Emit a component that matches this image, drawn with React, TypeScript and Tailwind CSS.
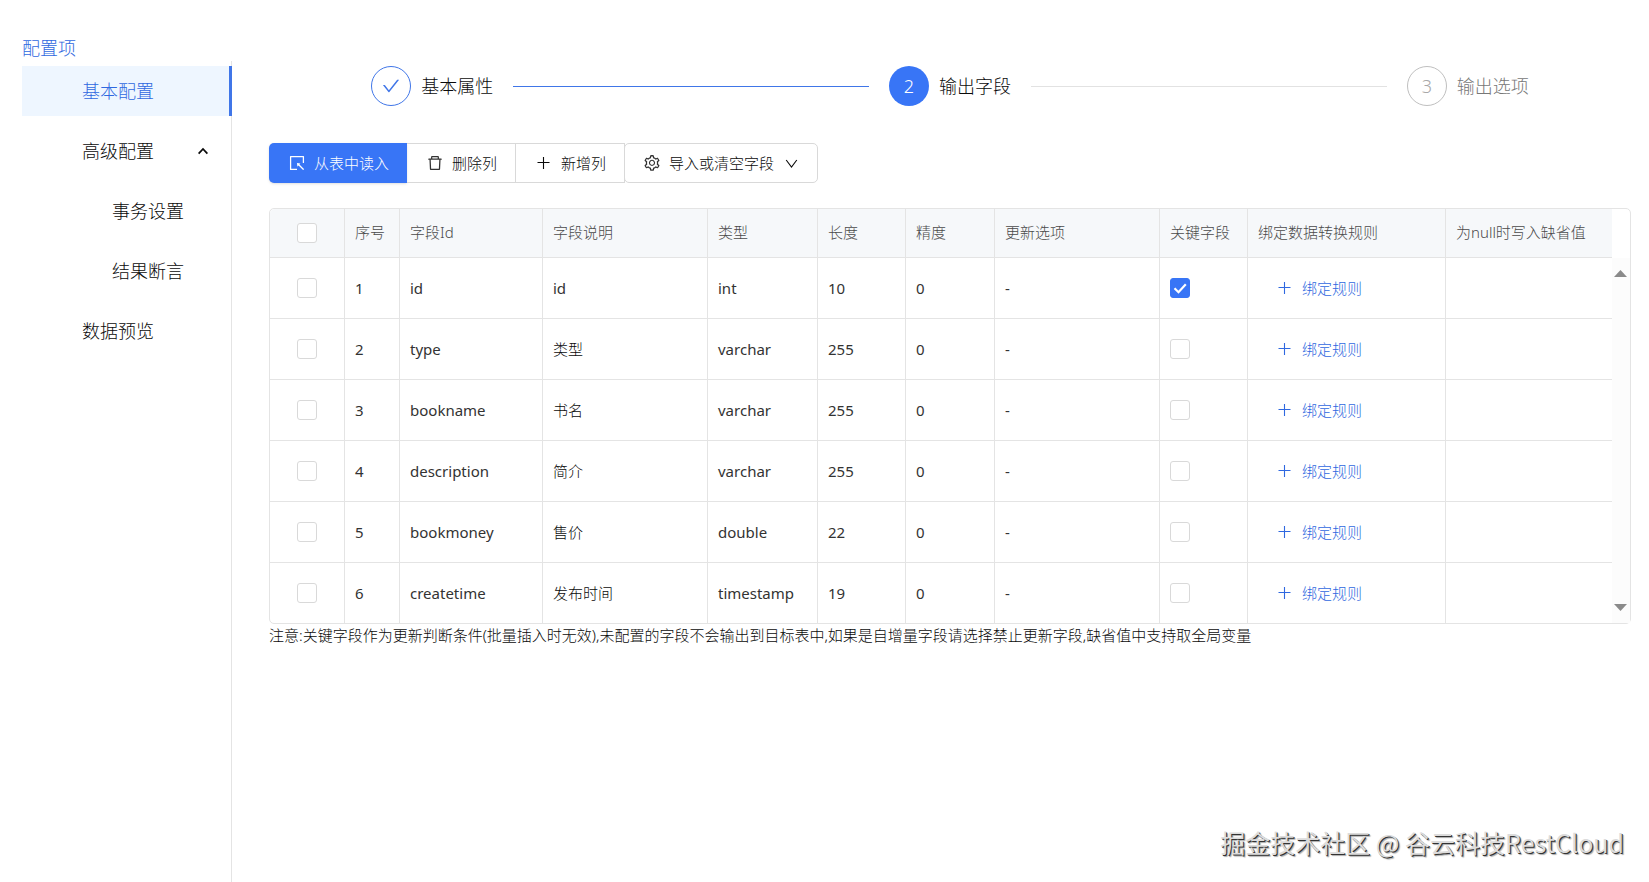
import React from 'react';
import {
  AiOutlineCheck,
  AiOutlineDelete,
  AiOutlineSelect,
  AiOutlineSetting
} from 'react-icons/ai';

const fields = [
  { no: 1, id: 'id', desc: 'id', type: 'int', length: 10, scale: 0, isKey: true },
  { no: 2, id: 'type', desc: '类型', type: 'varchar', length: 255, scale: 0, isKey: false },
  { no: 3, id: 'bookname', desc: '书名', type: 'varchar', length: 255, scale: 0, isKey: false },
  { no: 4, id: 'description', desc: '简介', type: 'varchar', length: 255, scale: 0, isKey: false },
  { no: 5, id: 'bookmoney', desc: '售价', type: 'double', length: 22, scale: 0, isKey: false },
  { no: 6, id: 'createtime', desc: '发布时间', type: 'timestamp', length: 19, scale: 0, isKey: false }
];

const headers = ['序号', '字段Id', '字段说明', '类型', '长度', '精度', '更新选项', '关键字段', '绑定数据转换规则', '为null时写入缺省值'];

function PlusIcon() {
  return (
    <svg viewBox="0 0 18 18" className="size-[18px]" fill="none" stroke="currentColor" strokeWidth="1.1">
      <path d="M8.5 3v12M2.5 8.5h12" />
    </svg>
  );
}

function Checkbox({ label, checked = false }: { label: string; checked?: boolean }) {
  return (
    <span className="relative block size-5">
      <input
        type="checkbox"
        aria-label={label}
        defaultChecked={checked}
        className="peer block size-5 appearance-none rounded-[3px] border border-[#d9d9d9] bg-white checked:border-[#3875f6] checked:bg-[#3875f6]"
      />
      <svg viewBox="0 0 20 20" className="pointer-events-none absolute inset-0 hidden size-5 peer-checked:block" fill="none" stroke="white" strokeWidth="2.2">
        <path d="M4.5 10.2 8.5 14.2 15.8 6.2" />
      </svg>
    </span>
  );
}

function Sidebar() {
  return (
    <aside className="flex w-[232px] shrink-0 flex-col pl-[22px] text-lg">
      <h2 className="pt-[35px] leading-[26px] text-[#2f68e0]">配置项</h2>
      <nav className="flex-1 border-r border-[#e4e4e4] pt-[5px]">
        <ul className="space-y-[10px] leading-[50px]">
          <li>
            <a href="#basic" className="-mr-px block border-r-3 border-[#4076e8] bg-[#eef6ff] pl-[60px] text-[#2f68e0]">基本配置</a>
          </li>
          <li>
            <button type="button" className="flex w-full items-center justify-between pr-[23px] pl-[60px]">
              高级配置
              <svg viewBox="0 0 10 8" className="h-2 w-[10px]" fill="none" stroke="currentColor" strokeWidth="1.8">
                <path d="M0.6 6.6 5 2 9.4 6.6" />
              </svg>
            </button>
          </li>
          <li>
            <a href="#transaction" className="block pl-[90px]">事务设置</a>
          </li>
          <li>
            <a href="#assertion" className="block pl-[90px]">结果断言</a>
          </li>
          <li>
            <a href="#preview" className="block pl-[60px]">数据预览</a>
          </li>
        </ul>
      </nav>
    </aside>
  );
}

function Steps() {
  return (
    <ol className="mx-auto flex w-[85%] items-center gap-5 text-lg leading-10">
      <li className="flex flex-1 items-center">
        <span className="flex size-10 items-center justify-center rounded-full border border-[#4076e8] text-[#4076e8]">
          <AiOutlineCheck className="size-5" />
        </span>
        <span className="ml-[10px]">基本属性</span>
        <span className="ml-5 h-px flex-1 bg-[#4076e8]" />
      </li>
      <li className="flex flex-1 items-center" aria-current="step">
        <span className="flex size-10 items-center justify-center rounded-full bg-[#3875f6] text-white">2</span>
        <span className="ml-[10px]">输出字段</span>
        <span className="ml-5 h-px flex-1 bg-[#e2e2e2]" />
      </li>
      <li className="flex items-center">
        <span className="flex size-10 items-center justify-center rounded-full border border-[#bfbfbf] text-[#a8a8a8]">3</span>
        <span className="ml-[10px] text-[#777]">输出选项</span>
      </li>
    </ol>
  );
}

function Toolbar() {
  return (
    <div className="mt-[37px] flex h-10">
      <button type="button" className="flex items-center gap-2 rounded-l-[5px] bg-[#3875f6] pr-[18px] pl-[19px] text-white shadow-sm">
        <AiOutlineSelect className="size-[18px]" />
        从表中读入
      </button>
      <button type="button" className="flex items-center gap-2 border-y border-r border-[#d9d9d9] pr-[18px] pl-[19px]">
        <AiOutlineDelete className="size-[18px] text-[#333]" />
        删除列
      </button>
      <button type="button" className="flex items-center gap-2 border-y border-r border-[#d9d9d9] pr-[18px] pl-[19px]">
        <PlusIcon />
        新增列
      </button>
      <button type="button" className="-ml-px flex items-center gap-2 rounded-[5px] border border-[#d9d9d9] px-[18px]">
        <AiOutlineSetting className="size-[18px] text-[#333]" />
        导入或清空字段
        <svg viewBox="0 0 15 15" className="ml-[2px] size-[15px]" fill="none" stroke="currentColor" strokeWidth="1.1">
          <path d="M2.2 4 7.5 11 12.8 4" />
        </svg>
      </button>
    </div>
  );
}

function FieldTable() {
  return (
    <div className="mt-[25px] flex rounded-[5px] border border-[#e4e4e4]">
      <table className="w-full flex-1 table-fixed border-separate border-spacing-0 text-left">
        <colgroup>
          <col className="w-[75px]" />
          <col className="w-[55px]" />
          <col className="w-[143px]" />
          <col className="w-[165px]" />
          <col className="w-[110px]" />
          <col className="w-[88px]" />
          <col className="w-[89px]" />
          <col className="w-[165px]" />
          <col className="w-[88px]" />
          <col className="w-[198px]" />
          <col className="w-[166px]" />
        </colgroup>
        <thead className="bg-[#f6f8fa] text-[#4a4a4a]">
          <tr className="h-[49px] *:border-r *:border-b *:border-[#e4e4e4] *:last:border-r-0">
            <th className="rounded-tl-[5px] pl-[27px]">
              <Checkbox label="全选" />
            </th>
            {headers.map((title) => (
              <th key={title} className="px-[10px] pb-[2px] font-light whitespace-nowrap">{title}</th>
            ))}
          </tr>
        </thead>
        <tbody className="font-normal text-[#333]">
          {fields.map((field) => (
            <tr key={field.no} className="h-[61px] *:border-r *:border-b *:border-[#e4e4e4] *:pl-[10px] *:first:pl-[27px] *:last:border-r-0 last:h-[60px] last:*:border-b-0">
              <td>
                <Checkbox label={`选择 ${field.id}`} />
              </td>
              <td>{field.no}</td>
              <td>{field.id}</td>
              <td className={field.desc === field.id ? '' : 'font-light text-[#0a0a0a]'}>{field.desc}</td>
              <td>{field.type}</td>
              <td>{field.length}</td>
              <td>{field.scale}</td>
              <td>-</td>
              <td>
                <Checkbox label={`${field.id} 关键字段`} checked={field.isKey} />
              </td>
              <td>
                <button type="button" className="flex items-center gap-2 px-[18px] font-light text-[#2f68e0]">
                  <PlusIcon />
                  绑定规则
                </button>
              </td>
              <td></td>
            </tr>
          ))}
        </tbody>
      </table>
      {/* Scroll track */}
      <div className="mt-[49px] flex w-[19px] flex-col items-center justify-between bg-[#fcfcfc] py-3 pr-[2px] text-[#8a8a8a]">
        <svg viewBox="0 0 13 7" className="h-[7px] w-[13px]" fill="currentColor">
          <path d="M0 7 6.5 0 13 7Z" />
        </svg>
        <svg viewBox="0 0 13 7" className="h-[7px] w-[13px]" fill="currentColor">
          <path d="M0 0H13L6.5 7Z" />
        </svg>
      </div>
    </div>
  );
}

export default function App() {
  return (
    <div className="relative flex min-h-screen bg-white font-['Noto_Sans','Noto_Sans_CJK_SC',sans-serif] text-[15px] font-light text-[#0a0a0a]">
      <Sidebar />
      <main className="min-w-0 flex-1 pt-[66px] pr-[18px] pl-[37px]">
        <Steps />
        <Toolbar />
        <FieldTable />
        <p className="leading-[22px]">
          注意:关键字段作为更新判断条件(批量插入时无效),未配置的字段不会输出到目标表中,如果是自增量字段请选择禁止更新字段,缺省值中支持取全局变量
        </p>
      </main>
      <div className="absolute right-[25px] bottom-[22px] font-['Noto_Sans_CJK_SC',sans-serif] text-[25px] leading-9 font-normal text-[#dcdcdc] [text-shadow:1px_1px_0_#333,2px_2px_1px_#aaa]">
        掘金技术社区 @ 谷云科技RestCloud
      </div>
    </div>
  );
}
